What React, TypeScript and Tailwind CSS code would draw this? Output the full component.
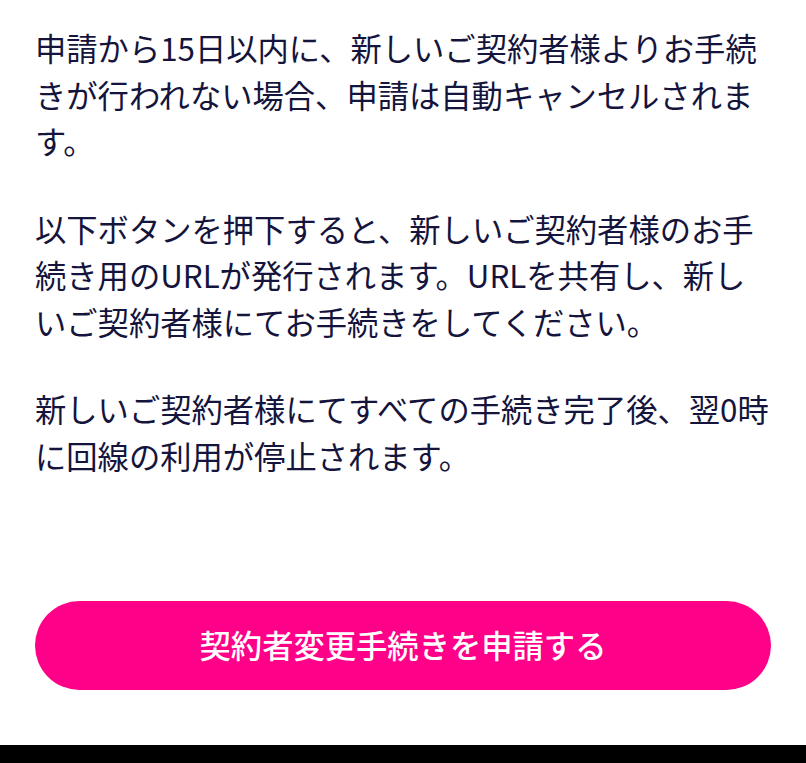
export default function App() {
  const paragraphs: string[][] = [
    [
      "申請から15日以内に、新しいご契約者様よりお手続",
      "きが行われない場合、申請は自動キャンセルされま",
      "す。",
    ],
    [
      "以下ボタンを押下すると、新しいご契約者様のお手",
      "続き用のURLが発行されます。URLを共有し、新し",
      "いご契約者様にてお手続きをしてください。",
    ],
    [
      "新しいご契約者様にてすべての手続き完了後、翌0時",
      "に回線の利用が停止されます。",
    ],
  ];

  return (
    <div
      className="w-full h-[763px] bg-white flex flex-col"
      style={{ fontFamily: '"Noto Sans CJK JP", "Noto Sans", sans-serif' }}
    >
      <main className="flex-1 px-[35px] pt-[25px] flex flex-col">
        <div className="flex flex-col gap-[41px] text-[31.3px] leading-[46.5px] text-[#14143c]">
          {paragraphs.map((lines, i) => (
            <p key={i} className="whitespace-nowrap">
              {lines.map((line, j) => (
                <span key={j} className="block">
                  {line}
                </span>
              ))}
            </p>
          ))}
        </div>

        <button className="mt-auto mb-[55px] h-[89px] w-full rounded-full bg-[#ff0088] text-white text-[31.3px] font-medium tracking-normal flex items-center justify-center">
          契約者変更手続きを申請する
        </button>
      </main>

      <div className="h-[18px] bg-black" />
    </div>
  );
}
